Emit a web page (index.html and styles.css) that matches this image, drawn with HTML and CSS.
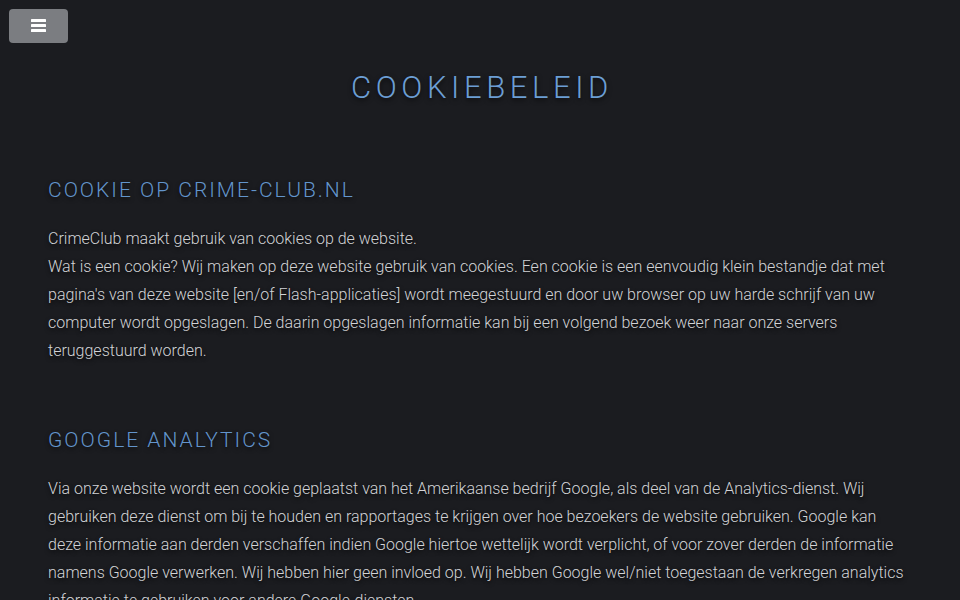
FILE: index.html
```html
<!DOCTYPE html>
<html lang="nl">
<head>
<meta charset="utf-8">
<title>Cookiebeleid</title>
<link rel="stylesheet" href="styles.css">
</head>
<body>
<header class="topbar">
  <button class="menu-toggle" aria-label="Menu">
    <svg width="15" height="13" viewBox="0 0 15 13" aria-hidden="true">
      <rect x="0" y="0" width="15" height="3" rx="0.6" fill="#fff"/>
      <rect x="0" y="5" width="15" height="3" rx="0.6" fill="#fff"/>
      <rect x="0" y="10" width="15" height="3" rx="0.6" fill="#fff"/>
    </svg>
  </button>
</header>
<main class="page">
  <h1 class="page-title">Cookiebeleid</h1>
  <section class="block">
    <h2 class="block-title">Cookie op crime-club.nl</h2>
    <p class="text">CrimeClub maakt gebruik van cookies op de website.<br>Wat is een cookie? Wij maken op deze website gebruik van cookies. Een cookie is een eenvoudig klein bestandje dat met pagina's van deze website [en/of Flash-applicaties] wordt meegestuurd en door uw browser op uw harde schrijf van uw computer wordt opgeslagen. De daarin opgeslagen informatie kan bij een volgend bezoek weer naar onze servers teruggestuurd worden.</p>
  </section>
  <section class="block">
    <h2 class="block-title">Google Analytics</h2>
    <p class="text">Via onze website wordt een cookie geplaatst van het Amerikaanse bedrijf Google, als deel van de Analytics-dienst. Wij gebruiken deze dienst om bij te houden en rapportages te krijgen over hoe bezoekers de website gebruiken. Google kan deze informatie aan derden verschaffen indien Google hiertoe wettelijk wordt verplicht, of voor zover derden de informatie namens Google verwerken. Wij hebben hier geen invloed op. Wij hebben Google wel/niet toegestaan de verkregen analytics informatie te gebruiken voor andere Google-diensten.</p>
  </section>
</main>
</body>
</html>
```
FILE: styles.css
```css
html, body {
  margin: 0;
  padding: 0;
  background: #1b1c20;
}
body {
  font-family: Roboto, "Liberation Sans", sans-serif;
  font-weight: 300;
  color: #d2d3d6;
  overflow: hidden;
}
.topbar {
  padding: 9px 0 0 9px;
  height: 34px;
}
.menu-toggle {
  width: 59px;
  height: 34px;
  border: none;
  border-radius: 4px;
  background: #7b7d81;
  display: flex;
  align-items: center;
  justify-content: center;
  padding: 0 0 1px 0;
  cursor: pointer;
}
.menu-toggle svg {
  display: block;
}
.page {
  padding: 0 48px;
}
.page-title {
  margin: 25px 0 0 0;
  text-align: center;
  font-size: 31px;
  line-height: 40px;
  font-weight: 300;
  letter-spacing: 4.6px;
  text-transform: uppercase;
  color: #6c9ed4;
  text-shadow: 0 2px 5px rgba(0,0,0,0.7);
  padding-left: 4px;
}
.block {
  margin-top: 70px;
}
.block + .block {
  margin-top: 63px;
}
.block-title {
  margin: 0;
  font-size: 21px;
  line-height: 24px;
  font-weight: 300;
  letter-spacing: 2px;
  text-transform: uppercase;
  color: #6395cc;
  text-shadow: 0 2px 4px rgba(0,0,0,0.7);
}
.text {
  margin: 23px 0 0 0;
  font-size: 16px;
  line-height: 28px;
  text-shadow: 0 2px 4px rgba(0,0,0,0.8);
}
```
